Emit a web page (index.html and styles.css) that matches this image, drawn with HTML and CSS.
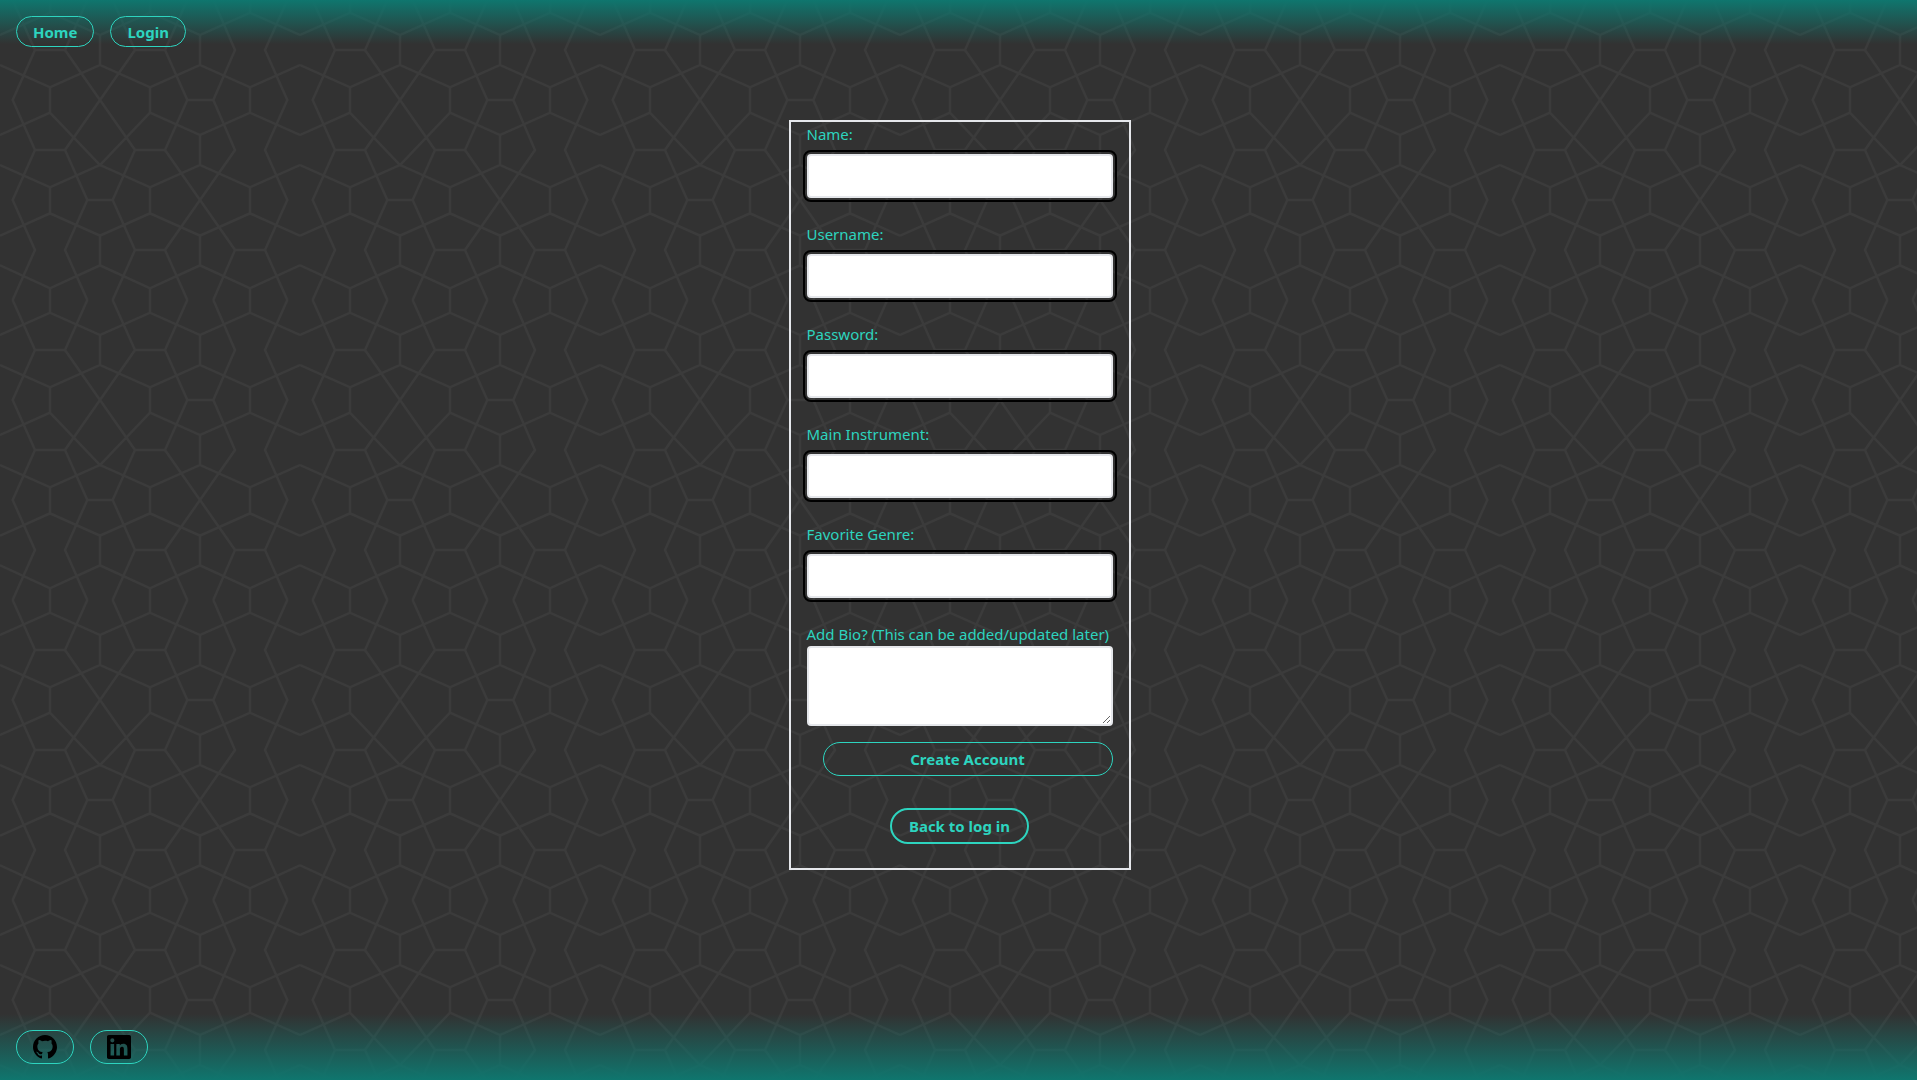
FILE: index.html
```html
<!DOCTYPE html>
<html lang="en">
<head>
<meta charset="utf-8">
<meta name="viewport" content="width=device-width, initial-scale=1">
<title>Create Account</title>
<link rel="stylesheet" href="styles.css">
</head>
<body>
<header class="site-header">
  <nav class="nav">
    <a class="pill" href="#home">Home</a>
    <a class="pill" href="#login">Login</a>
  </nav>
</header>
<main class="main">
  <form class="card">
    <div class="field">
      <label for="name">Name:</label>
      <input class="input" id="name" type="text">
    </div>
    <div class="field">
      <label for="username">Username:</label>
      <input class="input" id="username" type="text">
    </div>
    <div class="field">
      <label for="password">Password:</label>
      <input class="input" id="password" type="password">
    </div>
    <div class="field">
      <label for="instrument">Main Instrument:</label>
      <input class="input" id="instrument" type="text">
    </div>
    <div class="field">
      <label for="genre">Favorite Genre:</label>
      <input class="input" id="genre" type="text">
    </div>
    <label for="bio">Add Bio? (This can be added/updated later)</label>
    <textarea class="bio" id="bio"></textarea>
    <button class="pill create" type="submit">Create Account</button>
    <button class="pill back" type="button">Back to log in</button>
  </form>
</main>
<footer class="site-footer">
  <a class="pill social" href="#github" aria-label="GitHub">
    <svg class="icon" viewBox="0 0 24 24" aria-hidden="true"><path d="M12 0C5.374 0 0 5.373 0 12c0 5.302 3.438 9.8 8.207 11.387.599.111.793-.261.793-.577v-2.234c-3.338.726-4.033-1.416-4.033-1.416-.546-1.387-1.333-1.756-1.333-1.756-1.089-.745.083-.729.083-.729 1.205.084 1.839 1.237 1.839 1.237 1.07 1.834 2.807 1.304 3.492.997.107-.775.418-1.305.762-1.604-2.665-.305-5.467-1.334-5.467-5.931 0-1.311.469-2.381 1.236-3.221-.124-.303-.535-1.524.117-3.176 0 0 1.008-.322 3.301 1.23A11.509 11.509 0 0112 5.803c1.02.005 2.047.138 3.006.404 2.291-1.552 3.297-1.23 3.297-1.23.653 1.653.242 2.874.118 3.176.77.84 1.235 1.911 1.235 3.221 0 4.609-2.807 5.624-5.479 5.921.43.372.823 1.102.823 2.222v3.293c0 .319.192.694.801.576C20.566 21.797 24 17.3 24 12c0-6.627-5.373-12-12-12z"/></svg>
  </a>
  <a class="pill social" href="#linkedin" aria-label="LinkedIn">
    <svg class="icon" viewBox="0 0 24 24" aria-hidden="true"><path d="M20.447 20.452h-3.554v-5.569c0-1.328-.027-3.037-1.852-3.037-1.853 0-2.136 1.445-2.136 2.939v5.667H9.351V9h3.414v1.561h.046c.477-.9 1.637-1.85 3.37-1.85 3.601 0 4.267 2.37 4.267 5.455v6.286zM5.337 7.433a2.062 2.062 0 01-2.063-2.065 2.064 2.064 0 112.063 2.065zm1.782 13.019H3.555V9h3.564v11.452zM22.225 0H1.771C.792 0 0 .774 0 1.729v20.542C0 23.227.792 24 1.771 24h20.451C23.2 24 24 23.227 24 22.271V1.729C24 .774 23.2 0 22.222 0h.003z"/></svg>
  </a>
</footer>
</body>
</html>
```
FILE: styles.css
```css
*, *::before, *::after { box-sizing: border-box; }

body {
  margin: 0;
  min-height: 100vh;
  display: flex;
  flex-direction: column;
  font: 15px/24px "Noto Sans", "Open Sans", sans-serif;
  color: #2dd4bf;
  background-color: #323232;
  background-image: url("data:image/svg+xml,%3Csvg xmlns='http://www.w3.org/2000/svg' width='300' height='300' viewBox='300 150 900 900'%3E%3Cpath fill='none' stroke='%233b3b3b' stroke-width='7' d='M300 255L450 188 600 255 750 188 900 255 1050 188 1200 255M300 345L450 412 600 345 750 412 900 345 1050 412 1200 345M300 555L450 488 600 645 750 488 900 555 1050 488 1200 555M300 645L450 712 600 645 750 712 900 645 1050 712 1200 645M300 857L450 790 600 857 750 790 900 857 1050 790 1200 857M300 946L450 1015 600 946 750 1015 900 946 1050 1015 1200 946M338 150L405 300 338 450 405 600 338 750 405 900 338 1050M562 150L495 300 600 450 495 600 562 750 495 900 562 1050M638 150L705 300 600 450 705 600 638 750 705 900 638 1050M862 150L795 300 862 450 795 600 900 750 795 900 862 1050M940 150L1005 300 940 450 1005 600 900 750 1005 900 940 1050M1162 150L1095 300 1162 450 1095 600 1162 750 1095 900 1162 1050M405 300H495M705 300H795M862 450H940M405 600H495M705 600H795M562 750H638M705 900H795M1005 900H1095M450 150V188M750 150V188M1050 150V188M450 1015V1050M750 1015V1050M1050 1015V1050M450 412V488M750 412V488M1050 412V488M450 712V790M750 712V790M1050 712V790M600 255V345M900 255V345M900 555V645M600 857V946M900 857V946'/%3E%3C/svg%3E");
}

.site-header {
  height: 44px;
  padding: 16px;
  background: linear-gradient(to top, transparent, #0f766e);
}

.nav { display: flex; gap: 16px; }

.pill {
  padding: 4px 16px 2px;
  border: 1px solid #2dd4bf;
  border-radius: 18px;
  background: transparent;
  color: #2dd4bf;
  font: bold 15px/23px "Noto Sans", "Open Sans", sans-serif;
  text-decoration: none;
  cursor: pointer;
}

.main {
  flex: 1;
  display: flex;
  justify-content: center;
  align-items: flex-start;
  padding: 76px 16px 76px 18px;
}

.card {
  display: flex;
  flex-direction: column;
  width: 342px;
  padding: 0 16px 24px;
  border: 2px solid #e5e7eb;
}

.field {
  display: flex;
  flex-direction: column;
  gap: 8px;
  margin-bottom: 24px;
}

.input, .bio {
  width: 100%;
  margin: 0;
  padding: 8px;
  border: 2px solid #e5e7eb;
  border-radius: 4px;
  background: #fff;
  color: #000;
  font: inherit;
}

.input {
  height: 44px;
  outline: 2px solid #000;
  outline-offset: 2px;
}

.bio { height: 80px; }

.create, .back {
  padding: 4px 17px;
  line-height: 24px;
}

.create { margin: 16px 0 32px 16px; }

.back {
  align-self: center;
  border-width: 2px;
}

.site-footer {
  display: flex;
  gap: 16px;
  padding: 16px;
  background: linear-gradient(to bottom, transparent, #0f766e);
}

.social { padding: 4px 16px; }

.icon {
  display: block;
  width: 24px;
  height: 24px;
  fill: #000;
}
```
